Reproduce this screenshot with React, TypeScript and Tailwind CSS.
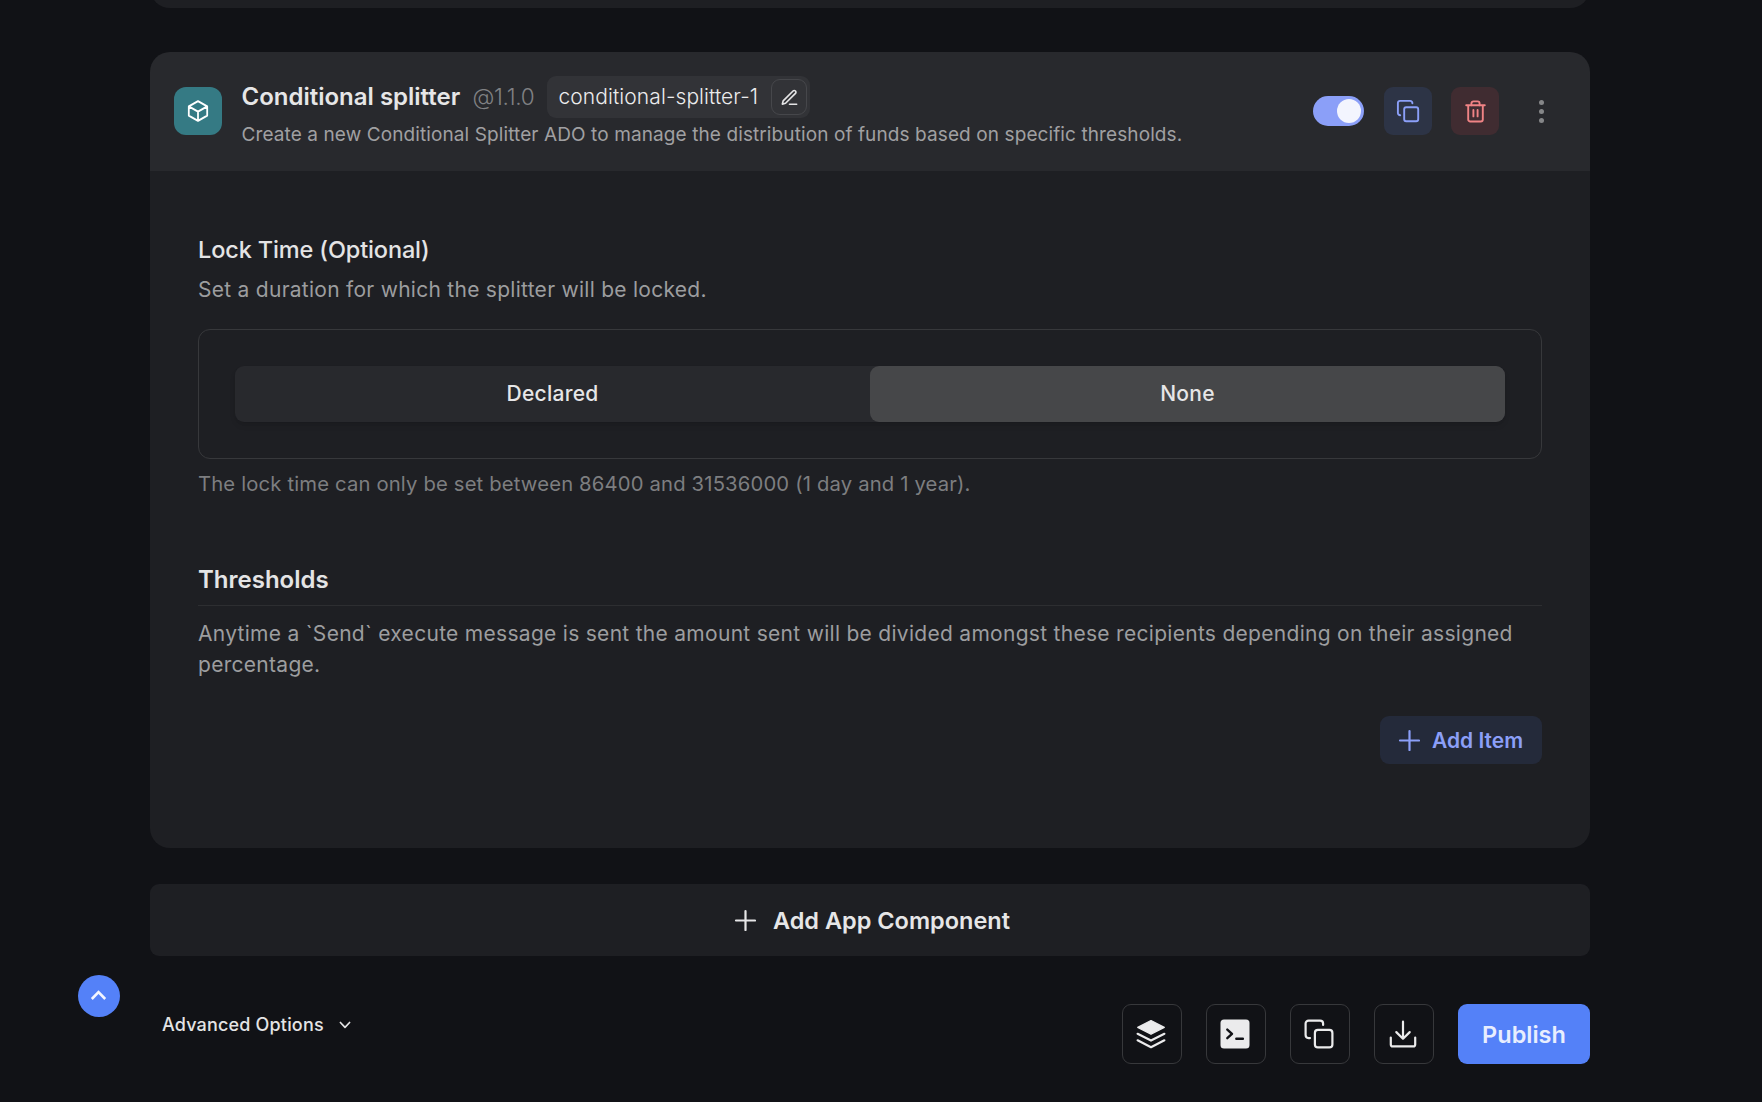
import type { ReactNode } from "react";

function CubeIcon() {
  return (
    <svg width="24" height="24" viewBox="0 0 24 24" fill="none" stroke="currentColor" strokeWidth="1.8" strokeLinecap="round" strokeLinejoin="round">
      <path d="M21.2 7.4L12 2.1 2.8 7.4m18.4 0L12 12.6m9.2-5.2v9.2L12 21.9M2.8 7.4l9.2 5.2M2.8 7.4v9.2l9.2 5.3m0-9.3v9.3" />
    </svg>
  );
}

function EditIcon() {
  return (
    <svg width="19" height="19" viewBox="0 0 24 24" fill="none" stroke="currentColor" strokeWidth="2.1" strokeLinecap="round" strokeLinejoin="round">
      <path d="M12 20.5h9" />
      <path d="M16.5 3.8a2.12 2.12 0 0 1 3 3L7 19.3l-4 1 1-4z" />
    </svg>
  );
}

function CopySmallIcon() {
  return (
    <svg width="24" height="24" viewBox="0 0 24 24" fill="none" stroke="currentColor" strokeWidth="1.9" strokeLinecap="round" strokeLinejoin="round">
      <rect x="8.2" y="8.2" width="14" height="14" rx="2" />
      <path d="M4.2 16.2a2.3 2.3 0 0 1-2.3-2.3V3.9a2 2 0 0 1 2-2h10.3a2.2 2.2 0 0 1 2.2 2.3" />
    </svg>
  );
}

function CopyLargeIcon() {
  return (
    <svg width="30" height="30" viewBox="0 0 30 30" fill="none" stroke="currentColor" strokeWidth="2.2" strokeLinecap="round" strokeLinejoin="round">
      <rect x="10.9" y="10.9" width="17.5" height="17.5" rx="3" />
      <path d="M6 19.1H4.6a3 3 0 0 1-3-3V4.6a3 3 0 0 1 3-3h11.5a3 3 0 0 1 3 3V6" />
    </svg>
  );
}

function TrashIcon() {
  return (
    <svg width="21" height="23" viewBox="0 0 21 23" fill="none" stroke="currentColor" strokeWidth="1.9" strokeLinecap="round" strokeLinejoin="round">
      <path d="M1.2 5.3h18.6M3.2 5.3v14.2a2 2 0 0 0 2 2h10.6a2 2 0 0 0 2-2V5.3" />
      <path d="M6.4 5.3V3.4a2 2 0 0 1 2-2h4.2a2 2 0 0 1 2 2v1.9" />
      <path d="M8.4 10v6.4M12.6 10v6.4" />
    </svg>
  );
}

function PlusIcon() {
  return (
    <svg width="22" height="22" viewBox="0 0 22 22" fill="none" stroke="currentColor" strokeWidth="2.2" strokeLinecap="round">
      <path d="M11.5 2v19M2 11.5h19" />
    </svg>
  );
}

function LayersIcon() {
  return (
    <svg width="30" height="30" viewBox="0 0 30 30" fill="none" stroke="currentColor" strokeLinecap="round" strokeLinejoin="round">
      <path d="M15 1.5l13.3 6.9L15 15.3 1.7 8.4z" fill="currentColor" strokeWidth="1.2" />
      <path d="M1.6 14.8L15 21.6l13.4-6.8M1.6 21.3L15 28.2l13.4-6.9" strokeWidth="2.2" />
    </svg>
  );
}

function TerminalIcon() {
  return (
    <svg width="30" height="30" viewBox="0 0 30 30" fill="none" strokeLinecap="round" strokeLinejoin="round">
      <rect x="0.5" y="0.5" width="29" height="29" rx="3.5" fill="currentColor" />
      <path d="M7.3 10.6l4.7 4.3-4.7 4.3M16.3 19.8h6.6" stroke="#111216" strokeWidth="2.4" />
    </svg>
  );
}

function DownloadIcon() {
  return (
    <svg width="28" height="28" viewBox="0 0 28 28" fill="none" stroke="currentColor" strokeWidth="2.2" strokeLinecap="round" strokeLinejoin="round">
      <path d="M14 1.7v17M7.3 12.1l6.7 6.7 6.7-6.7" />
      <path d="M1.8 17.6v6.8a2 2 0 0 0 2 2h20.4a2 2 0 0 0 2-2v-6.8" />
    </svg>
  );
}

function IconButton({ children }: { children: ReactNode }) {
  return (
    <button className="flex size-15 items-center justify-center rounded-[9px] border border-[#37383b] pr-0.5 text-[#ebebec]">
      {children}
    </button>
  );
}

function ComponentHeader() {
  return (
    <header className="flex h-[119px] items-center bg-[#28292d] pr-[45px] pb-px pl-6">
      <div className="flex size-12 items-center justify-center rounded-xl bg-[#357a84] text-white">
        <CubeIcon />
      </div>
      <div className="mt-1 ml-[19.5px] flex flex-col">
        <div className="flex h-[42px] items-center">
          <h2 className="w-[219px] text-2xl font-semibold text-[#e6e6e7]">Conditional splitter</h2>
          <span className="ml-3 w-[62px] text-[22.5px] font-light tracking-[-0.3px] text-[#808184]">@1.1.0</span>
          <div className="ml-[12.5px] flex h-[42px] w-[263px] items-center justify-between rounded-[9px] bg-[#323337] pr-[3px] pl-[11.5px]">
            <span className="text-[21px] font-light tracking-[0.08px] text-[#ececed]">conditional-splitter-1</span>
            <button className="flex size-9 items-center justify-center rounded-[9px] border border-[#46474b] text-[#e4e4e5]">
              <EditIcon />
            </button>
          </div>
        </div>
        <p className="mt-0.5 h-[30px] text-[19px] leading-[30px] tracking-[0.1px] whitespace-nowrap text-[#a0a0a2]">
          Create a new Conditional Splitter ADO to manage the distribution of funds based on specific thresholds.
        </p>
      </div>
      <div className="ml-auto flex items-center">
        <button role="switch" aria-checked="true" aria-label="Enabled" className="flex h-[30px] w-[51px] items-center justify-end rounded-full bg-[#8b9ff8] p-[3px]">
          <span className="size-6 rounded-full bg-[#f3f5fe]" />
        </button>
        <button className="ml-5 flex size-12 items-center justify-center rounded-[9px] bg-[#2d3446] text-[#8b9ff8]">
          <CopySmallIcon />
        </button>
        <button className="ml-[19px] flex size-12 items-center justify-center rounded-[9px] bg-[#402c31] text-[#f08385]">
          <TrashIcon />
        </button>
        <button className="ml-[39px] flex h-12 w-[7px] flex-col items-center justify-center gap-1">
          <span className="size-[5px] rounded-full bg-[#858688]" />
          <span className="size-[5px] rounded-full bg-[#858688]" />
          <span className="size-[5px] rounded-full bg-[#858688]" />
        </button>
      </div>
    </header>
  );
}

function ComponentBody() {
  return (
    <div className="flex h-[677px] flex-col bg-[#1e1f23] px-12 pt-[61px]">
      <h3 className="h-9 text-[23.5px] leading-9 font-medium tracking-[-0.13px] text-[#e4e4e5]">Lock Time (Optional)</h3>
      <p className="mt-1.5 h-[31px] text-[21px] leading-[31px] tracking-[0.27px] text-[#9c9d9f]">
        Set a duration for which the splitter will be locked.
      </p>
      <div className="mt-6 h-[130px] rounded-xl border border-[#37383b] p-9">
        <div className="flex h-14 rounded-[9px] bg-[#28292d] text-[21px] font-medium tracking-[0.27px] text-[#e6e6e7] shadow-md">
          <button className="flex-1">Declared</button>
          <button className="flex-1 rounded-[9px] bg-[#464749]">None</button>
        </div>
      </div>
      <p className="mt-2.5 h-[30px] text-[20.25px] leading-[30px] tracking-[0.16px] text-[#7d7e80]">
        The lock time can only be set between 86400 and 31536000 (1 day and 1 year).
      </p>
      <h3 className="mt-[63px] h-[44px] border-b border-[#2d2e31] text-2xl leading-9 font-semibold text-[#e4e4e5]">Thresholds</h3>
      <p className="mt-3 text-[21px] leading-[31px] tracking-[0.29px] text-[#9c9d9f]">
        Anytime a `Send` execute message is sent the amount sent will be divided amongst these recipients depending on their assigned
        <br />
        percentage.
      </p>
      <button className="mt-9 flex h-12 w-[162px] items-center self-end rounded-[9px] bg-[#242a3a] pl-[18px] text-[21px] font-semibold text-[#8b9ff8]">
        <PlusIcon />
        <span className="mt-0.5 ml-3">Add Item</span>
      </button>
    </div>
  );
}

export default function App() {
  return (
    <div className="flex h-[1102px] w-[1762px] flex-col overflow-hidden bg-[#111216] pr-[172px] pl-[150px] font-['Inter',sans-serif]">
      <div className="h-2 shrink-0 overflow-hidden">
        <div className="-mt-10 h-12 rounded-[20px] bg-[#1e1f23]" />
      </div>
      <section className="mt-11 shrink-0 overflow-hidden rounded-[20px]">
        <ComponentHeader />
        <ComponentBody />
      </section>
      <button className="mt-9 flex h-18 shrink-0 items-center justify-center rounded-[9px] bg-[#1e1f23] pl-1 text-[23.5px] font-semibold text-[#e6e6e7]">
        <PlusIcon />
        <span className="mt-0.5 ml-[17px]">Add App Component</span>
      </button>
      <footer className="flex shrink-0">
        <button aria-label="Scroll to top" className="mt-[19px] -ml-18 flex size-[42px] items-center justify-center rounded-full bg-[#5481f8] pr-px pb-px text-[#f3f5fe]">
          <svg width="17" height="11" viewBox="0 0 17 11" fill="none" stroke="currentColor" strokeWidth="2.6">
            <path d="M1.8 9l6.7-6.8L15.2 9" />
          </svg>
        </button>
        <button className="mt-[54px] ml-[42px] flex h-[30px] items-center text-lg font-medium tracking-[0.17px] text-[#e4e4e5]">
          Advanced Options
          <svg className="ml-[15px]" width="12" height="8" viewBox="0 0 12 8" fill="none" stroke="currentColor" strokeWidth="1.7" strokeLinecap="round" strokeLinejoin="round">
            <path d="M1.4 1.5L6 6.3l4.6-4.8" />
          </svg>
        </button>
        <div className="mt-12 ml-auto flex gap-6">
          <IconButton>
            <LayersIcon />
          </IconButton>
          <IconButton>
            <TerminalIcon />
          </IconButton>
          <IconButton>
            <CopyLargeIcon />
          </IconButton>
          <IconButton>
            <DownloadIcon />
          </IconButton>
          <button className="h-15 w-33 rounded-[9px] bg-[#5481f8] pt-0.5 text-[23.5px] font-semibold text-[#e8eefe]">Publish</button>
        </div>
      </footer>
    </div>
  );
}
